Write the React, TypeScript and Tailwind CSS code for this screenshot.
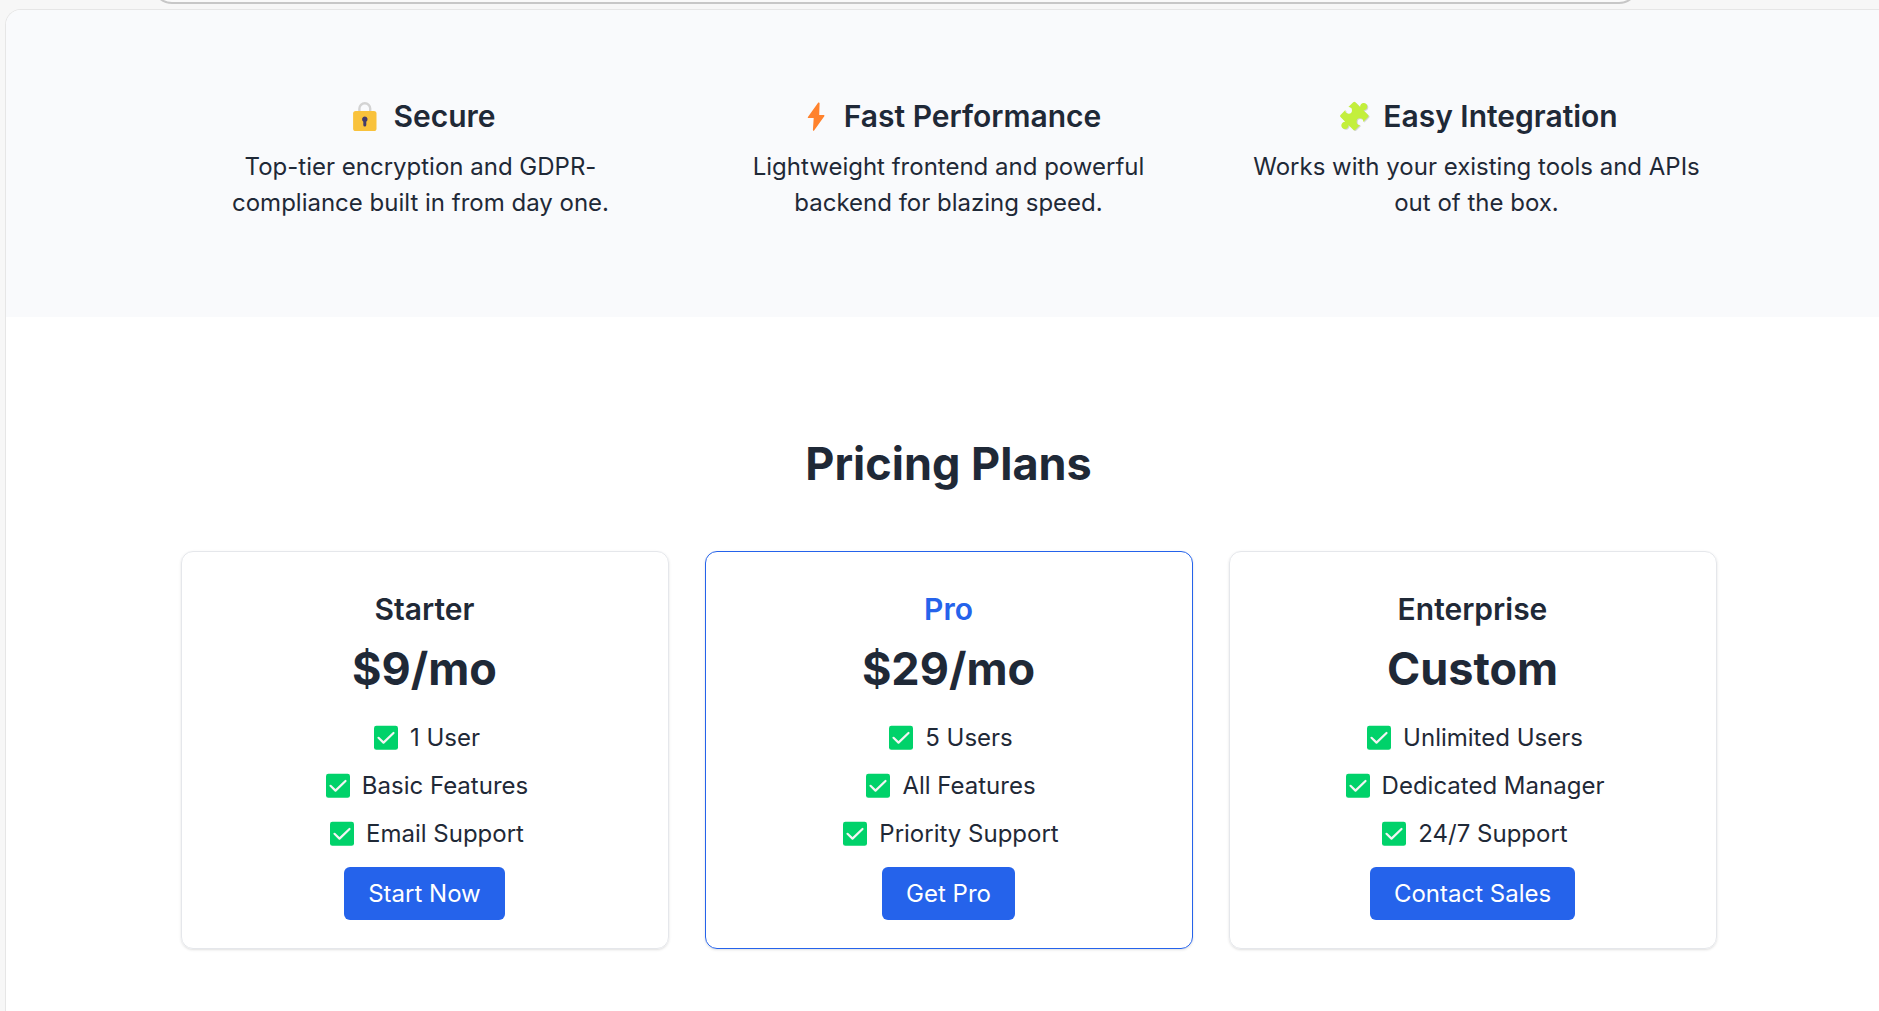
type FeatureIcon = 'lock' | 'bolt' | 'puzzle';

const features: { icon: FeatureIcon; title: string; text: string }[] = [
  { icon: 'lock', title: 'Secure', text: 'Top-tier encryption and GDPR-compliance built in from day one.' },
  { icon: 'bolt', title: 'Fast Performance', text: 'Lightweight frontend and powerful backend for blazing speed.' },
  { icon: 'puzzle', title: 'Easy Integration', text: 'Works with your existing tools and APIs out of the box.' },
];

const plans = [
  { name: 'Starter', price: '$9/mo', items: ['1 User', 'Basic Features', 'Email Support'], cta: 'Start Now', highlighted: false },
  { name: 'Pro', price: '$29/mo', items: ['5 Users', 'All Features', 'Priority Support'], cta: 'Get Pro', highlighted: true },
  { name: 'Enterprise', price: 'Custom', items: ['Unlimited Users', 'Dedicated Manager', '24/7 Support'], cta: 'Contact Sales', highlighted: false },
];

function Lock() {
  return (
    <svg className="h-[38px] w-[38px]" viewBox="0 0 38 38" aria-hidden="true">
      <path d="M14.4 15v-3.4a5.4 5.4 0 0 1 10.8 0V15" fill="none" stroke="#d3d3d3" strokeWidth="2.4" />
      <rect x="8.1" y="14" width="23.4" height="20" rx="2.6" fill="#f9c23c" />
      <path d="M19.8 19.4a2.9 2.9 0 0 1 1.5 5.3v3.2a1.5 1.5 0 0 1-3 0v-3.2a2.9 2.9 0 0 1 1.5-5.3z" fill="#433b6b" />
    </svg>
  );
}

function Bolt() {
  return (
    <svg className="h-[38px] w-[38px]" viewBox="-1 0 38 38" aria-hidden="true">
      <path
        d="M20.9 5.9 10.9 19.9c-.3.5 0 1.1.5 1.1h5.3l-.8 12c0 .9.7 1.1 1.2.5l10.2-14.3c.3-.5 0-1.1-.6-1.1h-4.5l.4-11.9c0-.8-1.2-1-1.7-.3z"
        fill="#ff822d"
      />
    </svg>
  );
}

function Puzzle() {
  // Square piece drawn upright around the origin, then turned 45 degrees
  const shape =
    'M-9-10.5h6.9a3.3 3.3 0 1 0 4.2 0h6.900a1.500 1.500 0 0 1 1.500 1.500v6.700a3.600 3.600 0 1 1 0 4.600v6.700a1.500 1.500 0 0 1-1.500 1.500h-6.900a3.300 3.300 0 1 0-4.200 0h-6.900a1.500 1.500 0 0 1-1.500-1.500v-6.700a3.600 3.600 0 1 1 0-4.600v-6.700a1.500 1.500 0 0 1 1.500-1.500z';
  return (
    <svg className="h-[38px] w-[38px]" viewBox="-1 0 38 38" aria-hidden="true">
      <path d={shape} fill="#d3d3d3" transform="translate(19.3 19.8) rotate(-45)" />
      <path d={shape} fill="#c3ef3c" transform="translate(18.3 19) rotate(-45)" />
    </svg>
  );
}

function CheckMark() {
  return (
    <svg className="h-[30px] w-8" viewBox="-2 0 32 30" aria-hidden="true">
      <rect x="3" y="2.8" width="24" height="24" rx="2.4" fill="#00d26a" />
      <path d="m7.5 14.8 5 4.8L22.5 10" fill="none" stroke="#f4f4f4" strokeWidth="2.2" strokeLinecap="round" strokeLinejoin="round" />
    </svg>
  );
}

const icons = { lock: Lock, bolt: Bolt, puzzle: Puzzle };

export default function App() {
  return (
    <div className="min-h-screen flex flex-col overflow-hidden bg-[#f7f7f7] font-['Inter',sans-serif] text-[#1f2937]">
      {/* Browser toolbar edge */}
      <div className="h-[9px] px-[152px]">
        <div className="-mt-9 mr-[88px] h-10 rounded-full border-2 border-[#c7c7c7] bg-[#fafafa]" />
      </div>

      <main className="grow ml-[5px] -mr-3 overflow-hidden rounded-tl-2xl border-t border-l border-[#e6e6e6] bg-white">
        <section className="bg-[#f9fafc] pt-[85px] pb-24">
          <div className="max-w-[1536px] mx-auto grid grid-cols-3 gap-12 text-center">
            {features.map((feature) => {
              const Icon = icons[feature.icon];
              return (
                <div key={feature.title}>
                  <h3 className="mb-3 flex items-center justify-center gap-[10px] text-[30px] leading-[42px] font-semibold">
                    <Icon />
                    {feature.title}
                  </h3>
                  <p className="text-2xl leading-9">{feature.text}</p>
                </div>
              );
            })}
          </div>
        </section>

        <section className="pt-[120px] pb-15 text-center">
          <h2 className="mb-15 text-[45px] leading-[54px] font-bold">Pricing Plans</h2>
          <div className="max-w-[1536px] mx-auto grid grid-cols-3 gap-9">
            {plans.map((plan) => (
              <div
                key={plan.name}
                className={`rounded-xl border p-9 shadow ${plan.highlighted ? 'border-[#2563eb]' : 'border-[#e5e7eb]'}`}
              >
                <h3 className={`mb-3 text-[30px] leading-[42px] font-semibold ${plan.highlighted ? 'text-[#2563eb]' : ''}`}>
                  {plan.name}
                </h3>
                <p className="mb-6 text-[45px] leading-[54px] font-bold">{plan.price}</p>
                <ul className="mb-6 space-y-3 text-2xl leading-9">
                  {plan.items.map((item) => (
                    <li key={item} className="flex items-center justify-center gap-[9px]">
                      <CheckMark />
                      {item}
                    </li>
                  ))}
                </ul>
                <div className="text-2xl leading-9">
                  <a href="#" className="rounded-md bg-[#2563eb] px-6 py-3 text-white hover:bg-[#1d4ed8]">
                    {plan.cta}
                  </a>
                </div>
              </div>
            ))}
          </div>
        </section>
      </main>
    </div>
  );
}
